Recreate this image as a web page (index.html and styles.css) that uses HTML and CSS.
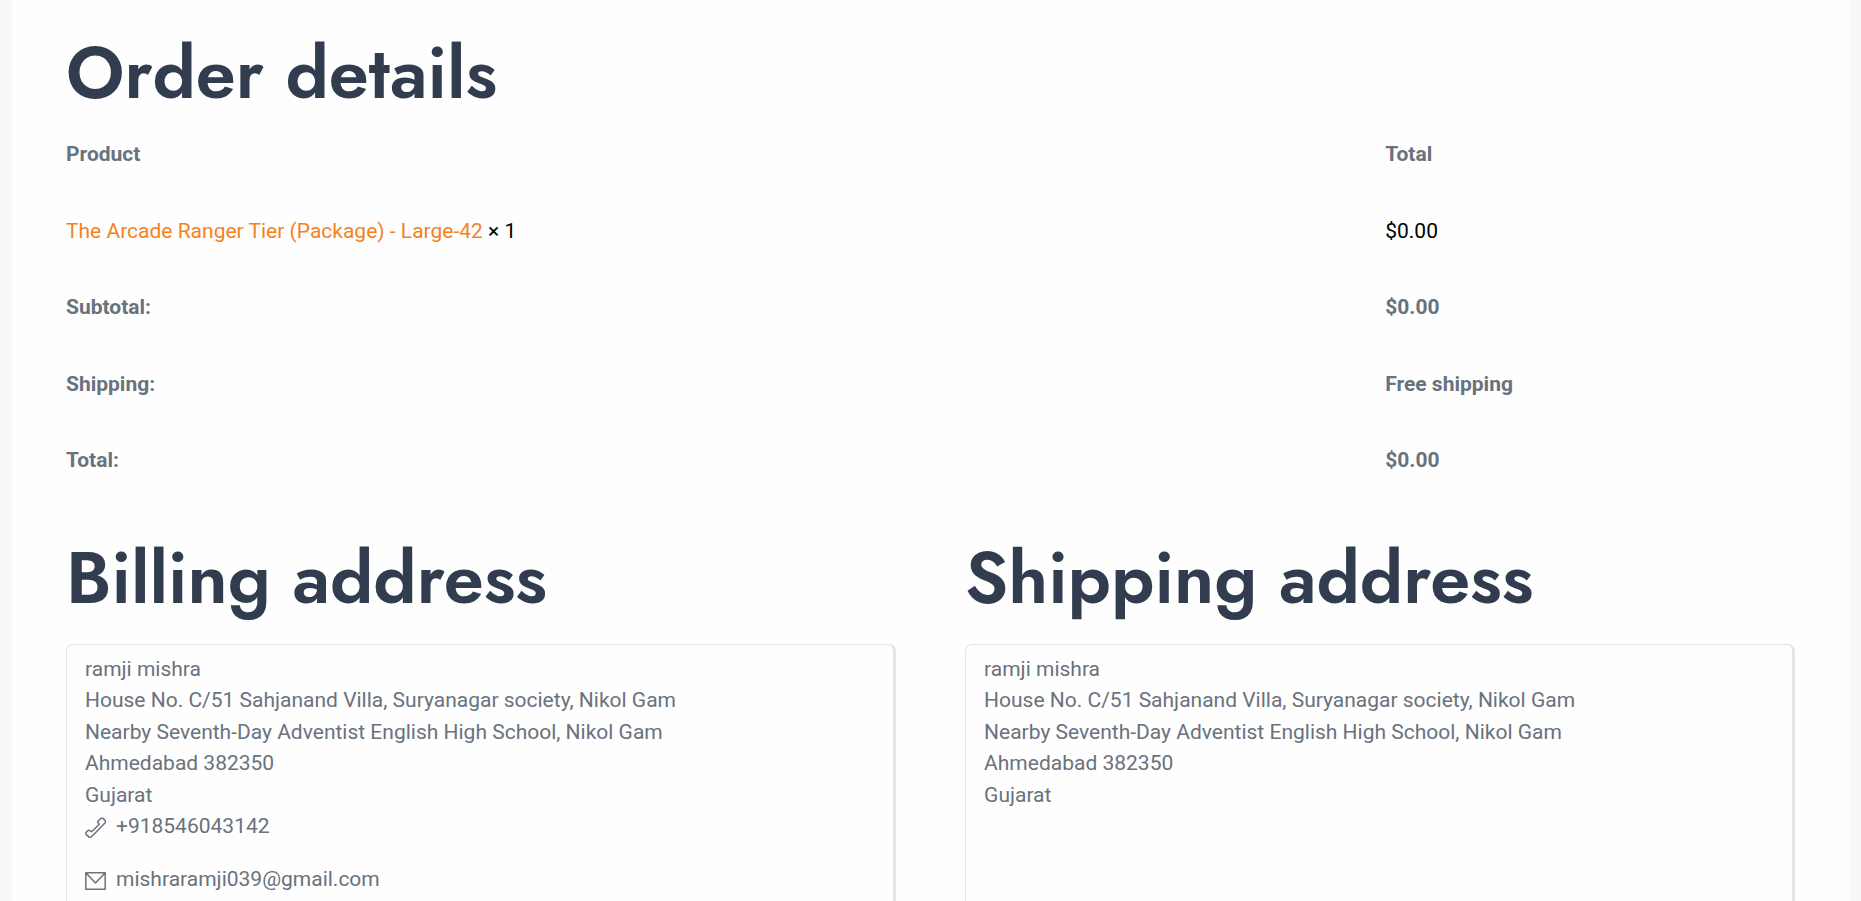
FILE: index.html
```html
<!DOCTYPE html>
<html lang="en">
<head>
<meta charset="utf-8">
<title>Order details</title>
<link rel="stylesheet" href="styles.css">
</head>
<body>
<main class="page">
  <section class="order">
    <h2 class="heading">Order details</h2>
    <table class="order-table">
      <thead>
        <tr><th class="col-product" scope="col">Product</th><th scope="col">Total</th></tr>
      </thead>
      <tbody>
        <tr class="item"><td><a href="#" class="product-link">The Arcade Ranger Tier (Package) - Large-42</a> × 1</td><td>$0.00</td></tr>
      </tbody>
      <tfoot>
        <tr><th scope="row">Subtotal:</th><td>$0.00</td></tr>
        <tr><th scope="row">Shipping:</th><td>Free shipping</td></tr>
        <tr><th scope="row">Total:</th><td>$0.00</td></tr>
      </tfoot>
    </table>
  </section>
  <section class="addresses">
    <div class="column">
      <h2 class="heading">Billing address</h2>
      <address class="card">
        ramji mishra<br>House No. C/51 Sahjanand Villa, Suryanagar society, Nikol Gam<br>Nearby Seventh-Day Adventist English High School, Nikol Gam<br>Ahmedabad 382350<br>Gujarat
        <p class="contact">
          <svg class="icon" viewBox="0 0 21 21" aria-hidden="true"><path d="M13 4.2 16 1.3Q17 .5 18 1.4L20 3.4Q21 4.7 20 6L9 17.2 6.2 19.8Q5 20.8 3.8 19.9L1.2 17.4Q.2 16.3 1.2 15.2L2.7 13.8Q3.8 12.8 5 13.8L6.5 14.7 14.3 7.2 13.1 5.8Q12.4 5 13 4.2Z"/></svg>
          <span>+918546043142</span>
        </p>
        <p class="contact">
          <svg class="icon" viewBox="0 0 21 21" aria-hidden="true"><path d="M.8 2.8H20.2V19.2H.8ZM1 3 10.5 13 20 3"/></svg>
          <span>mishraramji039@gmail.com</span>
        </p>
      </address>
    </div>
    <div class="column">
      <h2 class="heading">Shipping address</h2>
      <address class="card">
        ramji mishra<br>House No. C/51 Sahjanand Villa, Suryanagar society, Nikol Gam<br>Nearby Seventh-Day Adventist English High School, Nikol Gam<br>Ahmedabad 382350<br>Gujarat
      </address>
    </div>
  </section>
</main>
</body>
</html>
```
FILE: styles.css
```css
* { box-sizing: border-box; }
body {
  margin: 0;
  padding: 0 12px;
  background: #f7f8fa;
  color: #69727d;
  font: 21px/1.5 Roboto, "Liberation Sans", sans-serif;
}
.page {
  min-height: 100vh;
  padding: 30px 54px;
  background: #fefefe;
}
.heading {
  margin: 0;
  color: #313d4e;
  font: 600 72px/86px Jost, Lato, sans-serif;
}
.order-table {
  width: 100%;
  margin-bottom: 36px;
  border-collapse: collapse;
  table-layout: fixed;
  text-align: left;
}
.order-table th,
.order-table td {
  padding: 23px 0 22px;
  font-weight: 700;
}
.col-product { width: 76.3%; }
.order-table .item td {
  color: #000;
  font-weight: 400;
}
.product-link {
  color: #f58220;
  text-decoration: none;
}
.addresses {
  display: grid;
  grid-template-columns: 1fr 1fr;
  column-gap: 4%;
}
.column {
  display: flex;
  flex-direction: column;
  gap: 23px;
}
.card {
  flex: 1;
  padding: 9px 18px;
  border: 1px solid #e3e4e6;
  border-width: 1px 3px 3px 1px;
  border-radius: 7px;
  font-style: normal;
}
.contact {
  display: flex;
  align-items: center;
  gap: 10px;
  margin: 0 0 21px;
}
.icon {
  width: 21px;
  height: 21px;
  margin-top: 2px;
  fill: none;
  stroke: #69727d;
  stroke-width: 1.5;
  stroke-linejoin: round;
}
```
